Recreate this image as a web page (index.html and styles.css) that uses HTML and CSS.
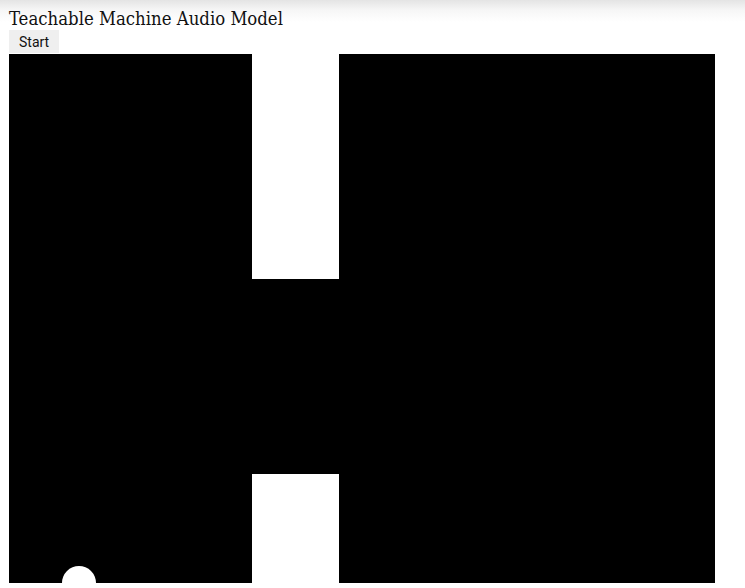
FILE: index.html
```html
<!DOCTYPE html>
<html>
<head>
<meta charset="utf-8">
<title>Teachable Machine Audio Model</title>
<link rel="stylesheet" href="styles.css">
</head>
<body>
<div class="title">Teachable Machine Audio Model</div>
<div class="controls"><button class="start" type="button">Start</button></div>
<div class="stage">
  <div class="pipe pipe-top"></div>
  <div class="pipe pipe-bottom"></div>
  <div class="ball"></div>
</div>
</body>
</html>
```
FILE: styles.css
```css
html, body {
  margin: 0;
  height: 100%;
}
body {
  padding: 8px 8px 0 9px;
  box-sizing: border-box;
  background: linear-gradient(to bottom, #e4e4e4 0px, #f6f6f6 10px, #ffffff 22px) no-repeat;
  overflow: hidden;
}
.title {
  font-family: "DejaVu Serif Condensed", "DejaVu Serif", serif;
  font-stretch: condensed;
  font-size: 18.4px;
  line-height: 22px;
  color: #111;
  height: 22px;
}
.controls {
  height: 24px;
}
.start {
  font-family: Roboto, "Liberation Sans", sans-serif;
  font-size: 14px;
  color: #111;
  background: #efefef;
  border: none;
  border-radius: 0;
  height: 23px;
  padding: 0 10px;
  margin: 0;
}
.stage {
  position: relative;
  width: 706px;
  height: 529px;
  background: #000;
  overflow: hidden;
}
.pipe {
  position: absolute;
  left: 243px;
  width: 87px;
  background: #fff;
}
.pipe-top {
  top: 0;
  height: 225px;
}
.pipe-bottom {
  top: 420px;
  bottom: 0;
}
.ball {
  position: absolute;
  left: 53px;
  top: 512px;
  width: 34px;
  height: 34px;
  border-radius: 50%;
  background: #fff;
}
```
